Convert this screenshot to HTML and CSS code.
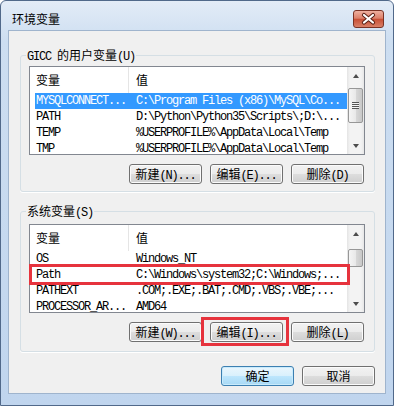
FILE: index.html
```html
<!DOCTYPE html>
<html lang="zh-CN">
<head>
    <meta charset="UTF-8">
    <meta name="viewport" content="width=device-width, initial-scale=1.0">
    <title>环境变量</title>
    <link rel="stylesheet" href="styles.css">
</head>
<body>
    <div class="window">
        <div class="titlebar">
            <span class="title">环境变量</span>
            <span class="close">
                <svg width="29" height="16" viewBox="0 0 29 16">
                    <path d="M10 4 L19 11.5 M19 4 L10 11.5" stroke="#5a2015" stroke-width="4.2" stroke-linecap="round" fill="none"/>
                    <path d="M10 4 L19 11.5 M19 4 L10 11.5" stroke="#fff" stroke-width="2.2" stroke-linecap="round" fill="none"/>
                </svg>
            </span>
        </div>

        <div class="client">
            <fieldset class="group">
                <legend><span class="en">GICC </span>的用户变量<span class="en">(U)</span></legend>
                <div class="list">
                    <div class="listBody">
                        <div class="listHead"><span>变量</span><span>值</span></div>
                        <div class="row selected en"><span class="name">MYSQLCONNECT...</span><span class="value">C:\Program Files (x86)\MySQL\Co...</span></div>
                        <div class="row en"><span class="name">PATH</span><span class="value">D:\Python\Python35\Scripts\;D:\...</span></div>
                        <div class="row en"><span class="name">TEMP</span><span class="value">%USERPROFILE%\AppData\Local\Temp</span></div>
                        <div class="row en"><span class="name">TMP</span><span class="value">%USERPROFILE%\AppData\Local\Temp</span></div>
                    </div>
                    <div class="scrollbar">
                        <span class="arrow up"></span>
                        <div class="track"><div class="thumb thumbUser"><span class="grip"></span></div></div>
                        <span class="arrow down"></span>
                    </div>
                </div>
                <div class="buttons">
                    <span class="btn">新建<span class="en">(N)...</span></span>
                    <span class="btn">编辑<span class="en">(E)...</span></span>
                    <span class="btn">删除<span class="en">(D)</span></span>
                </div>
            </fieldset>

            <fieldset class="group groupSys">
                <legend>系统变量<span class="en">(S)</span></legend>
                <div class="list">
                    <div class="listBody">
                        <div class="listHead"><span>变量</span><span>值</span></div>
                        <div class="row en"><span class="name">OS</span><span class="value">Windows_NT</span></div>
                        <div class="row en"><span class="name">Path</span><span class="value">C:\Windows\system32;C:\Windows;...</span></div>
                        <div class="row en"><span class="name">PATHEXT</span><span class="value">.COM;.EXE;.BAT;.CMD;.VBS;.VBE;...</span></div>
                        <div class="row en"><span class="name">PROCESSOR_AR...</span><span class="value">AMD64</span></div>
                    </div>
                    <div class="scrollbar">
                        <span class="arrow up"></span>
                        <div class="track"><div class="thumb thumbSys"></div></div>
                        <span class="arrow down"></span>
                    </div>
                </div>
                <div class="buttons">
                    <span class="btn">新建<span class="en">(W)...</span></span>
                    <span class="btn">编辑<span class="en">(I)...</span></span>
                    <span class="btn">删除<span class="en">(L)</span></span>
                </div>
            </fieldset>

            <div class="buttons dialogButtons">
                <span class="btn btnDefault">确定</span>
                <span class="btn">取消</span>
            </div>
        </div>

        <!-- rote Markierungen -->
        <span class="mark markRow"></span>
        <span class="mark markBtn"></span>
    </div>
</body>
</html>
```

FILE: styles.css
```css
body {
    margin: 0;
    font-family: "Noto Sans CJK SC", "Liberation Sans", sans-serif;
    font-size: 12px;
    color: #000;
}

.en {
    font-family: "Liberation Mono", "Noto Sans CJK SC", monospace;
    letter-spacing: -1.2px;
}

.window {
    position: relative;
    width: 394px;
    height: 406px;
    box-sizing: border-box;
    border: 1px solid #51698a;
    border-radius: 6px 6px 0 0;
    background: linear-gradient(#e3ecf7, #cddef1 40px, #c0d5ee);
}

.titlebar {
    display: flex;
    justify-content: space-between;
    align-items: flex-start;
    height: 29px;
    box-sizing: border-box;
    padding: 9px 9px 0 11px;
}

.title {
    line-height: 18px;
}

.close {
    display: flex;
    width: 31px;
    height: 18px;
    box-sizing: border-box;
    border: 1px solid #7a3224;
    border-radius: 3px;
    background: linear-gradient(#eeb0a0, #dc806a 45%, #c95036 52%, #d98068);
}

.client {
    height: 364px;
    margin: 0 7px;
    box-sizing: border-box;
    border: 1px solid #9fb4cd;
    background: #f0f0f0;
    padding: 16px 10px 0 11px;
}

.group {
    margin: 0;
    padding: 3px 9px 7px 8px;
    border: 1px solid #d5dfe5;
    border-radius: 3px;
    box-shadow: 0 1px 0 #fff;
}

.group legend {
    height: 16px;
    margin-left: -3px;
    padding: 0 1px;
    line-height: 16px;
}

.groupSys {
    margin-top: 11px;
    padding-top: 5px;
    padding-bottom: 9px;
}

.list {
    display: flex;
    height: 89px;
    box-sizing: border-box;
    border: 1px solid #828790;
    background: #fff;
}

.listBody {
    flex: 1;
    overflow: hidden;
}

.listHead {
    display: flex;
    height: 26px;
    line-height: 26px;
}

.listHead span:first-child {
    width: 92px;
    padding-left: 6px;
    border-right: 1px solid #e5e5e5;
}

.listHead span:last-child {
    padding-left: 7px;
}

.row {
    display: flex;
    height: 16px;
    line-height: 16px;
    margin-left: 5px;
    white-space: pre;
}

.row .name {
    width: 93px;
    padding-left: 1px;
    overflow: hidden;
}

.row .value {
    padding-left: 7px;
}

.row.selected {
    background: #3399ff;
    color: #fff;
}

.scrollbar {
    display: flex;
    flex-direction: column;
    width: 17px;
    background: linear-gradient(to right, #e4e4e4, #f3f3f3 3px, #f3f3f3 14px, #e7e7e7);
}

.arrow {
    display: flex;
    align-items: center;
    justify-content: center;
    height: 17px;
}

.arrow::before {
    content: "";
    border: 3.5px solid transparent;
}

.arrow.up::before {
    border-top-width: 0;
    border-bottom: 4px solid #4d4d4d;
}

.arrow.down::before {
    border-bottom-width: 0;
    border-top: 4px solid #4d4d4d;
}

.track {
    flex: 1;
}

.thumb {
    display: flex;
    align-items: center;
    justify-content: center;
    margin: 0 1px;
    box-sizing: border-box;
    border: 1px solid #979797;
    border-radius: 2px;
    background: linear-gradient(to right, #f5f5f5, #e9e9e9 50%, #d9d9d9 50%, #c8c8c8);
}

.thumbUser {
    margin-top: 4px;
    height: 35px;
}

.thumbSys {
    margin-top: 7px;
    height: 18px;
}

.grip {
    width: 7px;
    height: 7px;
    background: repeating-linear-gradient(#555 0 1px, #f4f4f4 1px 2px);
}

.buttons {
    display: flex;
    justify-content: flex-end;
    gap: 8px;
    margin-top: 9px;
    padding-right: 1px;
}

.btn {
    width: 73px;
    height: 20px;
    box-sizing: border-box;
    border: 1px solid #707070;
    border-radius: 3px;
    background: linear-gradient(#f2f2f2, #ebebeb 50%, #dddddd 50%, #cfcfcf);
    box-shadow: inset 0 0 0 1px #fbfbfb;
    text-align: center;
    line-height: 18px;
    white-space: pre;
}

.btnDefault {
    border-color: #3c7fb1;
    background: linear-gradient(#eaf6fd, #d9f0fc 50%, #bee6fd 50%, #a7d9f5);
    box-shadow: inset 0 0 0 1px #c9ebfc;
}

.dialogButtons {
    margin-top: 14px;
    padding-right: 0;
}

.mark {
    position: absolute;
    box-sizing: border-box;
    border: 3px solid #e6333d;
}

.markRow {
    left: 28px;
    top: 263px;
    width: 321px;
    height: 21px;
}

.markBtn {
    left: 200px;
    top: 316px;
    width: 88px;
    height: 29px;
}
```
